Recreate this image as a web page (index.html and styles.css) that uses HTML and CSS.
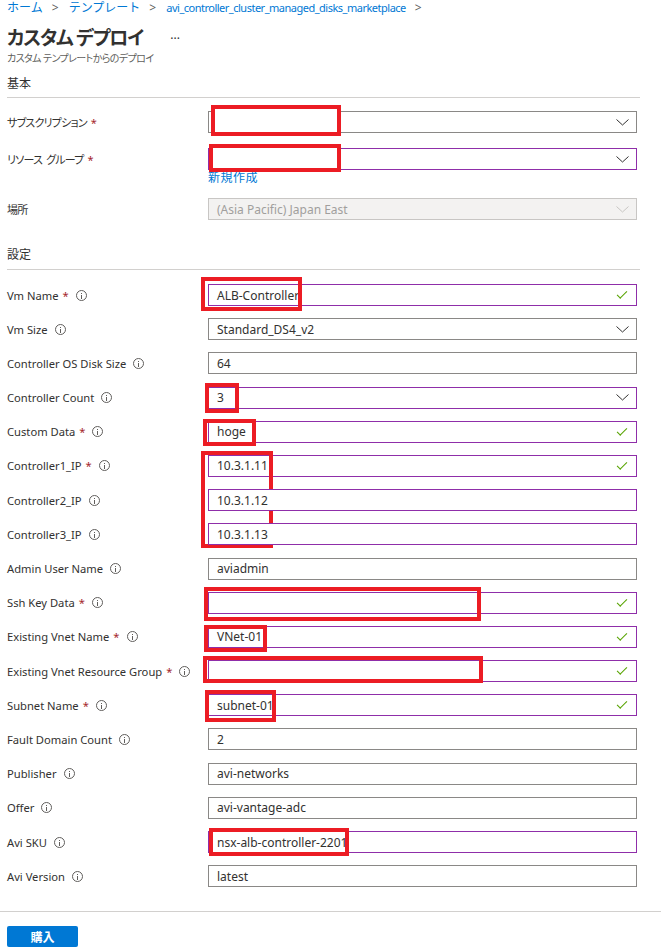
FILE: index.html
```html
<!DOCTYPE html>
<html lang="ja">
<head>
    <meta charset="UTF-8">
    <title>カスタム デプロイ</title>
    <link rel="stylesheet" href="styles.css">
</head>
<body>
    <div class="page">
        <nav class="breadcrumb">
            <a href="#">ホーム</a><span class="sep">&gt;</span>
            <a href="#">テンプレート</a><span class="sep">&gt;</span>
            <a class="crumb-en" href="#">avi_controller_cluster_managed_disks_marketplace</a><span class="sep">&gt;</span>
        </nav>
        <div class="title-row">
            <h1>カスタム デプロイ</h1>
            <span class="more">···</span>
        </div>
        <div class="subtitle">カスタム テンプレートからのデプロイ</div>

        <div class="section-head">基本</div>

        <div class="row row-sub">
            <div class="label ja">サブスクリプション<span class="req">*</span></div>
            <div class="field">
                <div class="input">
                    <span></span>
                    <svg class="chevron" width="13" height="7" viewBox="0 0 13 7"><polyline points="0.5,0.5 6.5,6 12.5,0.5" fill="none" stroke="#323130" stroke-width="1"/></svg>
                </div>
                <span class="mark mark-sub"></span>
            </div>
        </div>

        <div class="row row-rg">
            <div class="label ja">リソース<span class="gap"></span>グループ<span class="req">*</span></div>
            <div class="field">
                <div class="input dirty">
                    <span></span>
                    <svg class="chevron" width="13" height="7" viewBox="0 0 13 7"><polyline points="0.5,0.5 6.5,6 12.5,0.5" fill="none" stroke="#323130" stroke-width="1"/></svg>
                </div>
                <a class="new-link" href="#">新規作成</a>
                <span class="mark mark-rg"></span>
            </div>
        </div>

        <div class="row row-loc">
            <div class="label ja">場所</div>
            <div class="field">
                <div class="input disabled">
                    <span>(Asia Pacific) Japan East</span>
                    <svg class="chevron" width="13" height="7" viewBox="0 0 13 7"><polyline points="0.5,0.5 6.5,6 12.5,0.5" fill="none" stroke="#c8c6c4" stroke-width="1"/></svg>
                </div>
            </div>
        </div>

        <div class="section-head section-settings">設定</div>

        <div class="settings">
            <div class="row">
                <div class="label">Vm Name<span class="req">*</span><span class="info"></span></div>
                <div class="field">
                    <div class="input dirty"><span>ALB-Controller</span><span class="check"></span></div>
                    <span class="mark mark-vm"></span>
                </div>
            </div>
            <div class="row">
                <div class="label">Vm Size<span class="info"></span></div>
                <div class="field">
                    <div class="input">
                        <span>Standard_DS4_v2</span>
                        <svg class="chevron" width="13" height="7" viewBox="0 0 13 7"><polyline points="0.5,0.5 6.5,6 12.5,0.5" fill="none" stroke="#323130" stroke-width="1"/></svg>
                    </div>
                </div>
            </div>
            <div class="row">
                <div class="label">Controller OS Disk Size<span class="info"></span></div>
                <div class="field"><div class="input"><span>64</span></div></div>
            </div>
            <div class="row">
                <div class="label">Controller Count<span class="info"></span></div>
                <div class="field">
                    <div class="input dirty">
                        <span>3</span>
                        <svg class="chevron" width="13" height="7" viewBox="0 0 13 7"><polyline points="0.5,0.5 6.5,6 12.5,0.5" fill="none" stroke="#323130" stroke-width="1"/></svg>
                    </div>
                    <span class="mark mark-count"></span>
                </div>
            </div>
            <div class="row">
                <div class="label">Custom Data<span class="req">*</span><span class="info"></span></div>
                <div class="field">
                    <div class="input dirty"><span>hoge</span><span class="check"></span></div>
                    <span class="mark mark-custom"></span>
                </div>
            </div>
            <div class="row">
                <div class="label">Controller1_IP<span class="req">*</span><span class="info"></span></div>
                <div class="field">
                    <div class="input dirty"><span>10.3.1.11</span><span class="check"></span></div>
                    <span class="mark mark-ip"></span>
                </div>
            </div>
            <div class="row">
                <div class="label">Controller2_IP<span class="info"></span></div>
                <div class="field"><div class="input dirty"><span>10.3.1.12</span></div></div>
            </div>
            <div class="row">
                <div class="label">Controller3_IP<span class="info"></span></div>
                <div class="field"><div class="input dirty"><span>10.3.1.13</span></div></div>
            </div>
            <div class="row">
                <div class="label">Admin User Name<span class="info"></span></div>
                <div class="field"><div class="input"><span>aviadmin</span></div></div>
            </div>
            <div class="row">
                <div class="label">Ssh Key Data<span class="req">*</span><span class="info"></span></div>
                <div class="field">
                    <div class="input dirty"><span></span><span class="check"></span></div>
                    <span class="mark mark-ssh"></span>
                </div>
            </div>
            <div class="row">
                <div class="label">Existing Vnet Name<span class="req">*</span><span class="info"></span></div>
                <div class="field">
                    <div class="input dirty"><span>VNet-01</span><span class="check"></span></div>
                    <span class="mark mark-vnet"></span>
                </div>
            </div>
            <div class="row">
                <div class="label">Existing Vnet Resource Group<span class="req">*</span><span class="info"></span></div>
                <div class="field">
                    <div class="input dirty"><span></span><span class="check"></span></div>
                    <span class="mark mark-vnetrg"></span>
                </div>
            </div>
            <div class="row">
                <div class="label">Subnet Name<span class="req">*</span><span class="info"></span></div>
                <div class="field">
                    <div class="input dirty"><span>subnet-01</span><span class="check"></span></div>
                    <span class="mark mark-subnet"></span>
                </div>
            </div>
            <div class="row">
                <div class="label">Fault Domain Count<span class="info"></span></div>
                <div class="field"><div class="input"><span>2</span></div></div>
            </div>
            <div class="row">
                <div class="label">Publisher<span class="info"></span></div>
                <div class="field"><div class="input"><span>avi-networks</span></div></div>
            </div>
            <div class="row">
                <div class="label">Offer<span class="info"></span></div>
                <div class="field"><div class="input"><span>avi-vantage-adc</span></div></div>
            </div>
            <div class="row">
                <div class="label">Avi SKU<span class="info"></span></div>
                <div class="field">
                    <div class="input dirty"><span>nsx-alb-controller-2201</span></div>
                    <span class="mark mark-sku"></span>
                </div>
            </div>
            <div class="row">
                <div class="label">Avi Version<span class="info"></span></div>
                <div class="field"><div class="input"><span>latest</span></div></div>
            </div>
        </div>
    </div>

    <footer class="actions">
        <button class="btn-primary">購入</button>
    </footer>
</body>
</html>
```

FILE: styles.css
```css
body {
    margin: 0;
    font-family: "Noto Sans", "Noto Sans CJK JP", sans-serif;
    font-size: 12px;
    color: #323130;
    background: #ffffff;
    font-feature-settings: "palt";
}

.page {
    padding: 0 7px;
}

a {
    color: #0078d4;
    text-decoration: none;
}

.breadcrumb {
    height: 16px;
    line-height: 16px;
    font-size: 12px;
    white-space: nowrap;
    font-feature-settings: normal;
}

.breadcrumb .sep {
    color: #605e5c;
    margin: 0 7px 0 9px;
}

.crumb-en {
    font-size: 11px;
    letter-spacing: -0.5px;
}

.title-row {
    display: flex;
    align-items: center;
    margin-top: 9px;
    height: 26px;
}

h1 {
    margin: 0;
    font-size: 19px;
    line-height: 26px;
    font-weight: 700;
    letter-spacing: -1.2px;
}

.more {
    margin-left: 27px;
    font-size: 12px;
    color: #323130;
}

.subtitle {
    font-size: 10px;
    line-height: 14px;
    color: #605e5c;
    letter-spacing: -0.6px;
}

.section-head {
    margin-top: 11px;
    line-height: 16px;
    padding-bottom: 5px;
    border-bottom: 1px solid #d2d0ce;
    width: 633px;
}

.section-settings {
    margin-top: 27px;
    padding-bottom: 6px;
}

.row {
    display: grid;
    grid-template-columns: 201px 429px;
    align-items: start;
}

.row-sub {
    margin-top: 13px;
}

.row-rg {
    margin-top: 15px;
}

.row-loc {
    margin-top: 13px;
}

.settings {
    margin-top: 14px;
    display: flex;
    flex-direction: column;
    gap: 12.2px;
}

.label {
    display: flex;
    align-items: center;
    height: 22px;
    font-size: 11.2px;
    white-space: nowrap;
}

.label.ja {
    font-size: 11px;
    letter-spacing: -0.8px;
}

.gap {
    display: inline-block;
    width: 4px;
}

.req {
    color: #a4262c;
    margin-left: 4px;
    letter-spacing: 0;
}

.info {
    display: inline-block;
    box-sizing: border-box;
    width: 11px;
    height: 11px;
    margin-left: 7px;
    border: 1px solid #605e5c;
    border-radius: 50%;
    position: relative;
}

.info::before {
    content: "";
    position: absolute;
    left: 4px;
    top: 4px;
    width: 1px;
    height: 4px;
    background: #605e5c;
}

.info::after {
    content: "";
    position: absolute;
    left: 4px;
    top: 2px;
    width: 1px;
    height: 1px;
    background: #605e5c;
}

.field {
    position: relative;
}

.input {
    display: flex;
    align-items: center;
    justify-content: space-between;
    box-sizing: border-box;
    height: 22px;
    padding: 0 7px 0 8px;
    border: 1px solid #8a8886;
    background: #ffffff;
}

.input.dirty {
    border-color: #8f2ea9;
}

.input.disabled {
    background: #f3f2f1;
    border-color: #c8c6c4;
    color: #a19f9d;
}

.chevron {
    display: block;
}

.check {
    width: 9px;
    height: 4px;
    margin-right: 2px;
    margin-top: -3px;
    border-left: 1px solid #57a300;
    border-bottom: 1px solid #57a300;
    transform: rotate(-45deg);
}

.new-link {
    display: block;
    margin-top: 1px;
    line-height: 14px;
    font-size: 12px;
    letter-spacing: 0.5px;
}

.mark {
    position: absolute;
    box-sizing: border-box;
    border: 4px solid #ec1c24;
}

.mark-sub {
    left: 3px;
    top: -6px;
    width: 130px;
    height: 31px;
    background: #ffffff;
}

.mark-rg {
    left: 1px;
    top: -4px;
    width: 132px;
    height: 28px;
    background: #ffffff;
}

.mark-vm {
    left: -7px;
    top: -7px;
    width: 101px;
    height: 34px;
}

.mark-count {
    left: -3px;
    top: -4px;
    width: 34px;
    height: 30px;
}

.mark-custom {
    left: -5px;
    top: -2px;
    width: 53px;
    height: 27px;
}

.mark-ip {
    left: -7px;
    top: -4px;
    width: 72px;
    height: 97px;
}

.mark-ssh {
    left: -4px;
    top: -5px;
    width: 277px;
    height: 34px;
}

.mark-vnet {
    left: -4px;
    top: -1px;
    width: 63px;
    height: 27px;
}

.mark-vnetrg {
    left: -5px;
    top: -4px;
    width: 280px;
    height: 27px;
}

.mark-subnet {
    left: -3px;
    top: -4px;
    width: 71px;
    height: 32px;
}

.mark-sku {
    left: 1px;
    top: -3px;
    width: 140px;
    height: 28px;
}

.actions {
    margin-top: 24px;
    border-top: 1px solid #d2d0ce;
    padding: 14px 7px 0;
}

.btn-primary {
    display: block;
    width: 71px;
    height: 21px;
    padding: 0;
    border: none;
    border-radius: 2px;
    background: #0078d4;
    color: #ffffff;
    font-family: "Noto Sans CJK JP", sans-serif;
    font-size: 12px;
    font-weight: 700;
}
```
